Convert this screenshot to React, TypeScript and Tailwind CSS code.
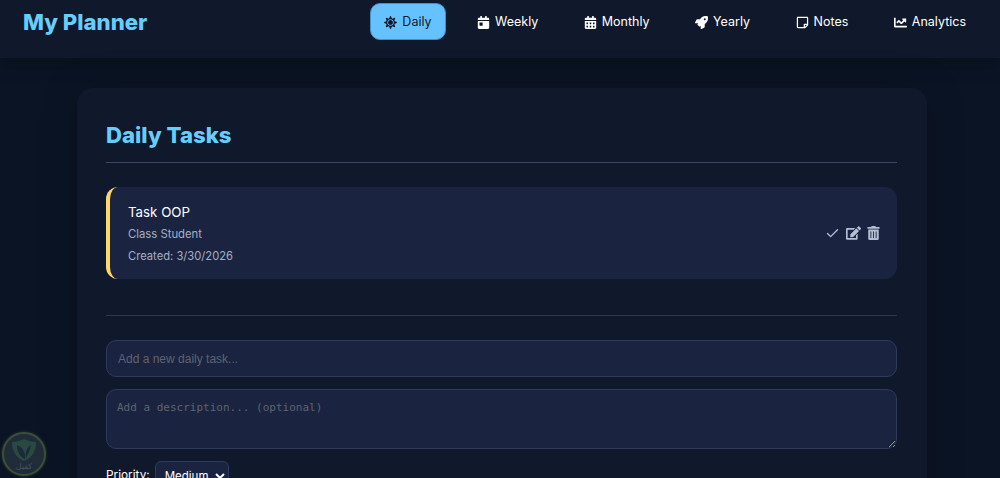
import { FaSun, FaCalendarDay, FaCalendarAlt, FaRocket, FaRegStickyNote, FaChartLine, FaEdit, FaTrashAlt } from "react-icons/fa";
import { Check } from "lucide-react";

const nav = [
  { label: "Daily", Icon: FaSun, active: true },
  { label: "Weekly", Icon: FaCalendarDay },
  { label: "Monthly", Icon: FaCalendarAlt },
  { label: "Yearly", Icon: FaRocket },
  { label: "Notes", Icon: FaRegStickyNote },
  { label: "Analytics", Icon: FaChartLine },
];

export default function App() {
  return (
    <div className="relative h-[478px] overflow-hidden bg-[#0b1424] font-['Inter',sans-serif] text-white">
      <header className="flex h-[58px] items-start justify-between bg-[#10182b] pl-[23px] pr-[20px] shadow-[0_4px_20px_rgba(0,0,0,0.25)]">
        <h1 className="mt-[7px] text-[22.2px] leading-[30px] font-extrabold text-[#66cdfd]">My Planner</h1>
        <nav className="mt-[3px] flex gap-[17.5px]">
          {nav.map(({ label, Icon, active }) => (
            <a
              key={label}
              className={`flex h-[37px] items-center gap-[5px] rounded-[10px] pt-[1px] text-[12.5px] ${active ? "border border-[#3c93c9] bg-[#66c2ff] px-[13px] text-[#10182b]" : "px-[14px] text-white"}`}
            >
              <Icon className="h-[13px] w-[13px]" />
              {label}
            </a>
          ))}
        </nav>
      </header>
      <main className="mt-[30px] ml-[77px] w-[850px] rounded-[16px] bg-[#10182b] pt-[30px] pr-[30px] pb-[30px] pl-[29px] shadow-[0_0_40px_rgba(0,0,0,0.15)]">
        <h2 className="border-b border-[#3b4660] pb-[10px] text-[22.2px] leading-[34px] font-extrabold text-[#66cdfd]">Daily Tasks</h2>
        <div className="mt-[24px] flex h-[92px] items-center justify-between rounded-[12px] border-l-4 border-[#ffd76a] bg-[#1a2340] pr-[17px] pl-[18px]">
          <div>
            <div className="mt-[1px] text-[13.3px] leading-[20px] text-white">Task OOP</div>
            <div className="mt-[3px] text-[11.3px] leading-[18px] text-[#a5b0c6]">Class Student</div>
            <div className="mt-[4px] text-[11.2px] leading-[18px] text-[#a5b0c6]">Created: 3/30/2026</div>
          </div>
          <div className="flex items-center gap-[6px] text-[#b4bfd2]">
            <Check className="h-[15px] w-[15px]" strokeWidth={2.2} />
            <FaEdit className="h-[14px] w-[15px]" />
            <FaTrashAlt className="h-[14px] w-[13px]" />
          </div>
        </div>
        <div className="mt-[36px] border-t border-[#2c3650]" />
        <input
          readOnly
          placeholder="Add a new daily task..."
          className="mt-[24px] block h-[37px] w-full rounded-[10px] border border-[#2f3b5c] bg-[#1a2340] px-[11px] font-['Liberation_Sans',sans-serif] text-[12px] outline-none placeholder:text-[#5f6470]"
        />
        <textarea
          readOnly
          placeholder="Add a description... (optional)"
          className="mt-[12px] block h-[60px] w-full rounded-[10px] border border-[#2f3b5c] bg-[#1a2340] px-[10px] py-[10px] font-['DejaVu_Sans_Mono',monospace] text-[11px] outline-none placeholder:text-[#5f6470]"
        />
        <div className="mt-[12px] flex items-center gap-[5px] text-[11.8px]">
          <span>Priority:</span>
          <select className="h-[30px] w-[74px] rounded-[6px] border border-[#2f3b5c] bg-[#1a2340] pl-[5px] text-[11.5px] text-white">
            <option>Medium</option>
          </select>
        </div>
      </main>
      <div className="absolute bottom-[2px] left-[2px] flex h-[44px] w-[44px] flex-col items-center rounded-full border-[2px] border-[#3a4f35] bg-[#212c3a] pt-[4px] shadow-[0_0_3px_rgba(70,100,60,0.6)]">
        <svg viewBox="0 0 28 24" className="h-[24px] w-[28px]">
          <path d="M14 1 C18 3 22 4 26 4 C26 13 22 20 14 23 C6 20 2 13 2 4 C6 4 10 3 14 1 Z" fill="#2a4a3f" />
          <path d="M7 7 C12 9 16 14 15 21 C10 19 7 14 7 7 Z" fill="#1a2a3a" />
          <path d="M21 7 C20 12 18 16 16 20 C15 14 17 9 21 7 Z" fill="#1a2a3a" />
        </svg>
        <span className="font-['DejaVu_Sans',sans-serif] text-[8px] leading-[10px] text-[#46535a]">كفيل</span>
      </div>
    </div>
  );
}
